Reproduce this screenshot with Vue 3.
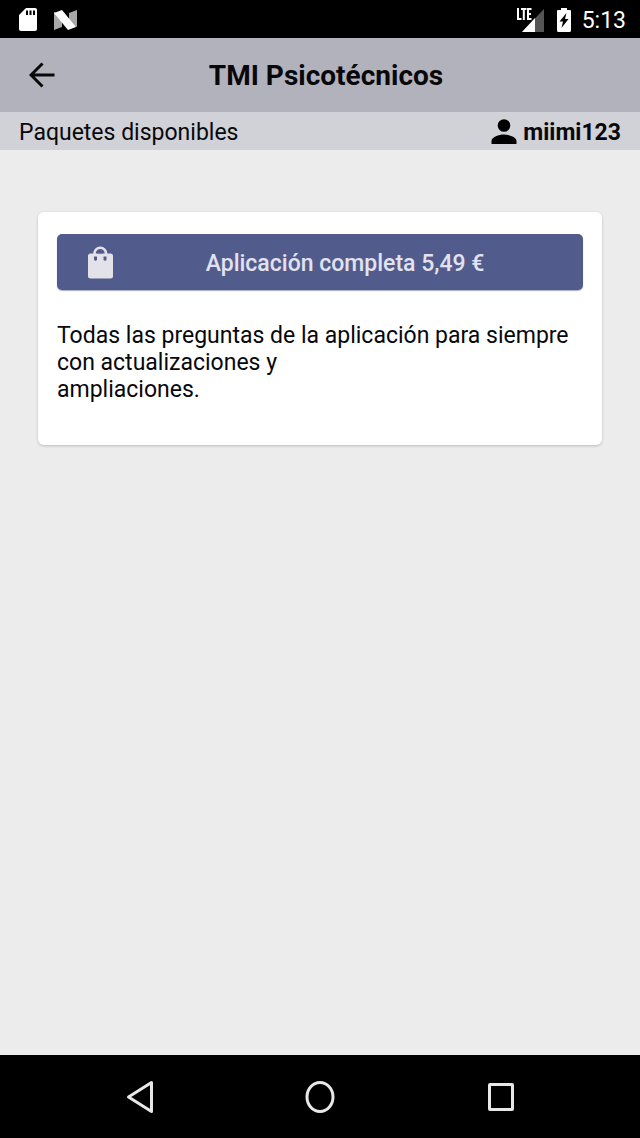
<script setup>
const product = {
  label: 'Aplicación completa 5,49 €',
  lines: ['Todas las preguntas de la aplicación para siempre con actualizaciones y', 'ampliaciones.'],
}
</script>

<template>
  <div class="screen">
    <div class="status">
      <div class="status-group">
        <svg class="sd" width="20" height="24" viewBox="0 0 20 24" aria-hidden="true">
          <path d="M8 0H17Q19 0 19 2V21Q19 23 17 23H3Q1 23 1 21V7Z" fill="#fff" />
          <path d="M8 2.500h2v4.500h-2zM11.500 2.500h2v4.500h-2zM15 2.500h2v4.500h-2z" fill="#000" />
        </svg>
        <svg class="nougat" width="24" height="22" viewBox="0 0 24 22" aria-hidden="true">
          <path d="M1 3L9 6V18L1 21ZM16 4L24 1V18L16 15Z" fill="#a8a8a8" />
          <path d="M1 4L9 1L23 18L15 21Z" fill="#fff" />
        </svg>
      </div>
      <div class="status-group">
        <svg width="29" height="26" viewBox="0 0 29 26" aria-hidden="true">
          <path d="M28 2V25H6Z" fill="#555" />
          <path d="M19 11V25H6Z" fill="#fff" />
          <path d="M2 1V12H5.500M5 2H10.500M7.800 2V13M15.500 2H12V12H15.500M12 7H15" fill="none" stroke="#fff" stroke-width="2" />
        </svg>
        <svg class="battery" width="14" height="24" viewBox="0 0 14 24" aria-hidden="true">
          <path d="M4 0H10V2H13Q14 2 14 3V22Q14 24 13 24H1Q0 24 0 22V3Q0 2 1 2H4Z" fill="#fff" />
          <path d="M9.500 5L2.500 13.500H6L4.500 20L11.500 11H8Z" fill="#000" />
        </svg>
        <span class="clock">5:13</span>
      </div>
    </div>

    <header class="toolbar">
      <button class="back" type="button" aria-label="Atrás">
        <svg width="26" height="26" viewBox="0 0 26 26" aria-hidden="true">
          <path d="M13.500 1.500L2 13L13.500 24.500M2 13H25.500" fill="none" stroke="#08080a" stroke-width="3" />
        </svg>
      </button>
      <h1>TMI Psicotécnicos</h1>
    </header>

    <div class="subbar">
      <span>Paquetes disponibles</span>
      <span class="user">
        <svg width="26" height="26" viewBox="0 0 26 26" aria-hidden="true">
          <circle cx="13" cy="6.500" r="6.300" />
          <path d="M0.500 25V22C0.500 18 8 15.500 13 15.500S25.500 18 25.500 22V25Z" />
        </svg>
        <b>miimi123</b>
      </span>
    </div>

    <main>
      <article class="card">
        <button class="buy" type="button">
          <svg width="38" height="38" viewBox="0 0 38 38" aria-hidden="true">
            <path d="M13.500 13V9.500A5.500 5.500 0 0 1 25 9.500V13" fill="none" stroke="#e2e2e8" stroke-width="2.500" />
            <rect x="7" y="9.500" width="25" height="25" rx="2.500" fill="#e2e2e8" />
            <path d="M16.500 9.500A2.800 2.300 0 0 1 22 9.500ZM13 12.500h3v3.500q-1.500 1.500 -3 0zM22.500 12.500h3v3.500q-1.500 1.500 -3 0z" fill="#525c8c" />
          </svg>
          <span>{{ product.label }}</span>
        </button>
        <p><span v-for="line in product.lines" :key="line" class="line">{{ line }}</span></p>
      </article>
    </main>

    <nav>
      <button type="button" aria-label="Volver">
        <svg width="36" height="36" viewBox="0 0 36 36" aria-hidden="true">
          <path d="M29.500 3.500V32.500L6.500 18Z" />
        </svg>
      </button>
      <button type="button" aria-label="Inicio">
        <svg width="36" height="36" viewBox="0 0 36 36" aria-hidden="true">
          <ellipse cx="18" cy="18" rx="13" ry="14.500" />
        </svg>
      </button>
      <button type="button" aria-label="Recientes">
        <svg width="36" height="36" viewBox="0 0 36 36" aria-hidden="true">
          <rect x="7.500" y="5.500" width="23" height="25" rx="0.500" />
        </svg>
      </button>
    </nav>
  </div>
</template>

<style>
body {
  margin: 0;
  background: #ececec;
}
</style>

<style scoped>
.screen {
  min-height: 100vh;
  display: flex;
  flex-direction: column;
  background: #ececec;
  color: #08080a;
  font: 23px/27px Roboto, sans-serif;
}

button {
  display: flex;
  align-items: center;
  justify-content: center;
  padding: 0;
  border: 0;
  background: none;
  font: inherit;
  cursor: pointer;
}

svg {
  display: block;
  flex: none;
}

.status {
  box-sizing: border-box;
  display: flex;
  justify-content: space-between;
  height: 38px;
  padding: 2px 14px 0 18px;
  background: #000;
}

.status-group {
  display: flex;
  align-items: center;
}

.nougat {
  margin-left: 15px;
}

.battery {
  margin: 0 11px 0 12px;
}

.clock {
  color: #fff;
  font-size: 23px;
}

.toolbar {
  box-sizing: border-box;
  display: grid;
  grid-template-columns: 56px 1fr 44px;
  align-items: center;
  height: 74px;
  padding: 0 14px;
  background: #b2b2bc;
}

.back {
  height: 56px;
}

h1 {
  margin: 0;
  padding-top: 2px;
  text-align: center;
  font-size: 28px;
  line-height: 32px;
  font-weight: 700;
}

.subbar {
  box-sizing: border-box;
  display: flex;
  align-items: center;
  justify-content: space-between;
  height: 38px;
  padding: 2px 19px 0;
  background: #d1d2d7;
}

.user {
  display: flex;
  align-items: center;
  gap: 6px;
}

main {
  flex: 1;
  padding: 62px 38px;
}

.card {
  padding: 22px 19px 42px;
  border-radius: 6px;
  background: #fff;
  box-shadow: 0 1px 3px rgba(0, 0, 0, 0.2);
}

.buy {
  width: 100%;
  height: 56px;
  padding: 2px 12px 0 24px;
  border-radius: 5px;
  background: #525c8c;
  color: #e2e2f0;
  font-weight: 500;
  box-shadow: 0 1px 1px rgba(82, 92, 140, 0.5);
}

.buy span {
  flex: 1;
}

p {
  margin: 32px 0 0;
}

.line {
  display: block;
}

nav {
  display: grid;
  grid-template-columns: repeat(3, 1fr);
  height: 83px;
  padding: 0 50px;
  background: #000;
}

nav svg {
  fill: none;
  stroke: #e8e8e8;
  stroke-width: 3;
  stroke-linejoin: round;
}
</style>
